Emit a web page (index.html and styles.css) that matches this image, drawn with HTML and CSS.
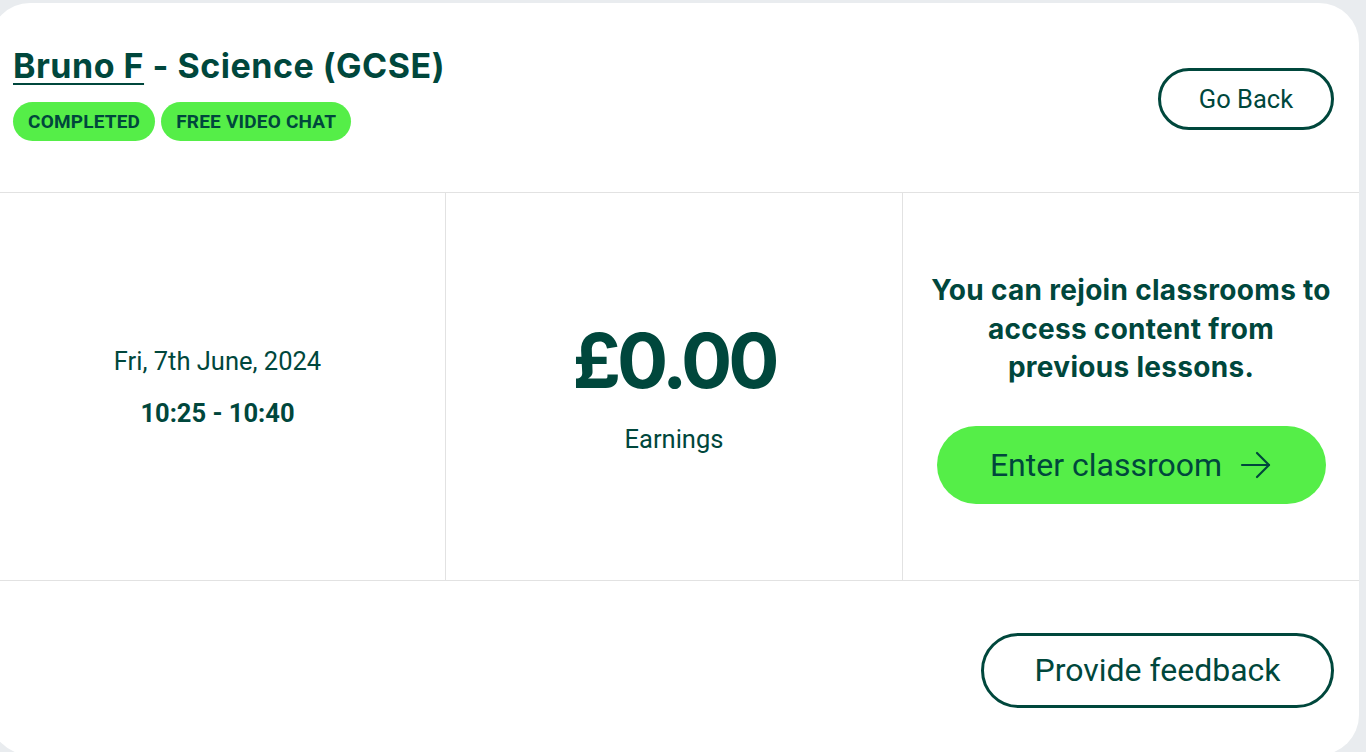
FILE: index.html
```html
<!DOCTYPE html>
<html lang="en">
<head>
<meta charset="utf-8">
<title>Lesson</title>
<link rel="stylesheet" href="styles.css">
</head>
<body>
<div class="card">
  <header class="head">
    <div class="head-left">
      <h1 class="title"><a href="#" class="student">Bruno F</a> - Science (GCSE)</h1>
      <div class="badges">
        <span class="badge">COMPLETED</span>
        <span class="badge">FREE VIDEO CHAT</span>
      </div>
    </div>
    <button class="btn-outline btn-back">Go Back</button>
  </header>
  <section class="stats">
    <div class="cell">
      <div class="date">Fri, 7th June, 2024</div>
      <div class="time">10:25 - 10:40</div>
    </div>
    <div class="cell">
      <div class="amount">£0.00</div>
      <div class="label">Earnings</div>
    </div>
    <div class="cell cell-action">
      <p class="note">You can rejoin classrooms to access content from previous lessons.</p>
      <button class="btn-green">Enter classroom
        <svg class="arrow" width="32" height="30" viewBox="0 0 32 30" fill="none" stroke="#00473c" stroke-width="2.2" stroke-linecap="round" stroke-linejoin="round"><path d="M2 15H29"/><path d="M17 3L29 15L17 27"/></svg>
      </button>
    </div>
  </section>
  <footer class="foot">
    <button class="btn-outline btn-feedback">Provide feedback</button>
  </footer>
</div>
</body>
</html>
```

FILE: styles.css
```css
* { box-sizing: border-box; }
html, body { margin: 0; padding: 0; }
body {
  background: #e9ecef;
  font-family: Roboto, "Liberation Sans", sans-serif;
  color: #00473c;
  overflow: hidden;
  height: 752px;
}
.card {
  margin: 3px 0 0 -10px;
  width: 1369px;
  height: 752px;
  background: #fff;
  border-radius: 40px;
  display: flex;
  flex-direction: column;
}
.head {
  height: 190px;
  display: flex;
  align-items: center;
  justify-content: space-between;
  padding: 0 25px 0 23px;
  border-bottom: 1px solid #e2e2e2;
}
.head-left { margin-top: -10px; }
.title {
  margin: 0;
  font-family: Inter, "Liberation Sans", sans-serif;
  font-weight: 700;
  font-size: 34px;
  line-height: 42px;
  letter-spacing: 0.5px;
}
.student { color: #00473c; text-decoration: underline; text-decoration-thickness: 2px; text-underline-offset: 5px; }
.badges { display: flex; gap: 6px; margin-top: 15px; }
.badge {
  background: #55ee48;
  border-radius: 20px;
  height: 39px;
  padding: 0 15px 0 15px;
  display: flex;
  align-items: center;
  font-weight: 700;
  font-size: 19px;
  letter-spacing: 0.2px;
}
.btn-outline {
  background: #fff;
  border: 3px solid #00473c;
  border-radius: 40px;
  color: #00473c;
  font-family: Roboto, "Liberation Sans", sans-serif;
}
.btn-back {
  width: 176px;
  height: 62px;
  font-size: 25.5px;
  margin-top: 2px;
}
.stats {
  height: 388px;
  display: grid;
  grid-template-columns: 455px 457px 457px;
  border-bottom: 1px solid #e2e2e2;
}
.cell {
  display: flex;
  flex-direction: column;
  align-items: center;
  justify-content: center;
  text-align: center;
}
.cell + .cell { border-left: 1px solid #e2e2e2; }
.date { font-size: 25.5px; line-height: 30px; margin-top: 1px; }
.time { font-size: 25.5px; font-weight: 700; margin-top: 22px; line-height: 30px; }
.amount {
  font-family: Inter, "Liberation Sans", sans-serif;
  font-weight: 700;
  font-size: 76px;
  line-height: 80px;
  letter-spacing: -4px;
  margin-top: 0px;
}
.label { font-size: 25.5px; margin-top: 24px; line-height: 30px; }
.cell-action { padding: 0 28px; }
.note {
  margin: 0;
  font-family: Inter, "Liberation Sans", sans-serif;
  font-weight: 700;
  font-size: 28px;
  line-height: 38.5px;
  letter-spacing: 0.3px;
  margin-top: 2px;
}
.btn-green {
  margin-top: 39px;
  width: 389px;
  height: 78px;
  border: none;
  border-radius: 40px;
  background: #55ee48;
  color: #00473c;
  font-family: Roboto, "Liberation Sans", sans-serif;
  font-size: 32px;
  display: flex;
  align-items: center;
  justify-content: center;
  gap: 18px;
}
.arrow { display: block; }
.foot {
  flex: 1;
  display: flex;
  align-items: center;
  justify-content: flex-end;
  padding-right: 25px;
  padding-top: 4px;
}
.btn-feedback {
  width: 353px;
  height: 75px;
  font-size: 32px;
}
```
